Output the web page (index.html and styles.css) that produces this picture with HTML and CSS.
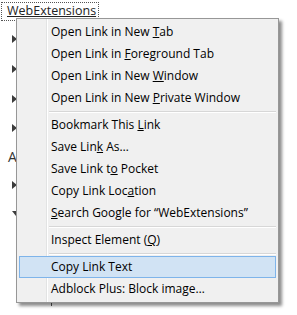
FILE: index.html
```html
<!DOCTYPE html>
<html lang="en">
<head>
  <meta charset="UTF-8">
  <title>Link context menu</title>
  <link rel="stylesheet" href="styles.css">
</head>
<body>
  <div class="page">
    <a class="link" href="#">WebExtensions</a>

    <ul class="tree">
      <li class="row r1"><span class="twisty"></span></li>
      <li class="row r2"><span class="twisty"></span></li>
      <li class="row r3"><span class="twisty"></span></li>
      <li class="row r4"><span class="twisty"></span></li>
      <li class="row r5"><span class="letter">A</span></li>
      <li class="row r6"><span class="twisty"></span></li>
      <li class="row r7"><span class="twisty open"></span></li>
    </ul>
    <span class="tick"></span>

    <div class="menu">
      <div class="item">Open Link in New <u>T</u>ab</div>
      <div class="item">Open Link in <u>F</u>oreground Tab</div>
      <div class="item">Open Link in New <u>W</u>indow</div>
      <div class="item">Open Link in New <u>P</u>rivate Window</div>
      <div class="sep"></div>
      <div class="item">Bookmark This <u>L</u>ink</div>
      <div class="item">Save Lin<u>k</u> As…</div>
      <div class="item">Save Link t<u>o</u> Pocket</div>
      <div class="item">Copy Link Loc<u>a</u>tion</div>
      <div class="item"><u>S</u>earch Google for “WebExtensions”</div>
      <div class="sep"></div>
      <div class="item">Inspect Element (<u>Q</u>)</div>
      <div class="sep"></div>
      <div class="item active">Copy Link Text</div>
      <div class="item">Adblock Plus: Block image…</div>
    </div>
  </div>
</body>
</html>
```

FILE: styles.css
```css
body {
  margin: 0;
  background: #fff;
  font-family: "Open Sans", "Noto Sans", sans-serif;
  font-size: 12px;
  color: #000;
}
.page {
  position: relative;
  width: 297px;
  height: 315px;
  overflow: hidden;
}
.link {
  display: inline-block;
  margin: 3px 0 0 2px;
  padding: 0 2px 0 5px;
  height: 17px;
  line-height: 16px;
  font-size: 12.5px;
  color: #222;
  outline: 1px dotted #555;
  text-decoration: underline;
}

/* tree behind the popup */
.tree {
  list-style: none;
  margin: 4px 0 0;
  padding: 0;
}
.row {
  height: 30px;
  display: flex;
  align-items: center;
  padding-left: 12px;
}
.r4 { height: 27px; }
.r5 { height: 30px; padding-left: 8px; }
.r6 { height: 27px; }
.twisty {
  width: 0;
  height: 0;
  border-left: 5px solid #3c3c3c;
  border-top: 4px solid transparent;
  border-bottom: 4px solid transparent;
}
.twisty.open {
  border-left: 4px solid transparent;
  border-right: 4px solid transparent;
  border-top: 5px solid #3c3c3c;
  border-bottom: 0;
}
.letter {
  font-size: 14px;
  color: #333;
}
.tick {
  position: absolute;
  left: 51px;
  top: 303px;
  width: 1px;
  height: 3px;
  background: #555;
}

/* context menu */
.menu {
  position: absolute;
  left: 16px;
  top: 18px;
  width: 257px;
  padding: 2px;
  border: 1px solid #979797;
  background:
    linear-gradient(to right, transparent 29px, #e2e3e3 29px, #e2e3e3 30px, #fff 30px, #fff 31px, transparent 31px),
    #f0f0f0;
  box-shadow: 3px 3px 3px rgba(0, 0, 0, 0.45);
}
.item {
  height: 20px;
  line-height: 20px;
  padding-left: 31px;
  border: 1px solid transparent;
  white-space: nowrap;
}
.item.active {
  background-color: #d1e3f4;
  border-color: #7eb4ea;
}
.sep {
  height: 5px;
  margin-left: 30px;
  background: linear-gradient(to bottom, transparent 2px, #d7d7d7 2px, #d7d7d7 3px, #fff 3px, #fff 4px, transparent 4px);
}
```
